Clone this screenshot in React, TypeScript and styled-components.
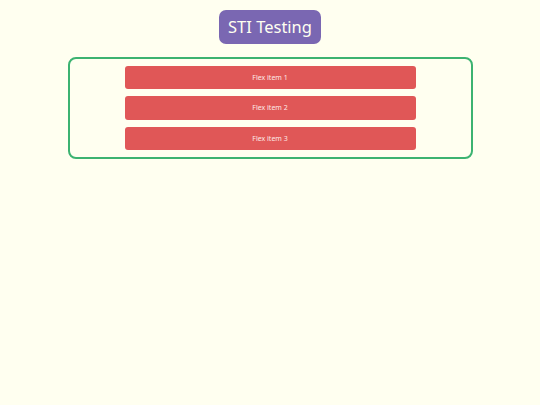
import React from "react";
import styled, { createGlobalStyle } from "styled-components";

const GlobalStyle = createGlobalStyle`
  html, body {
    margin: 0;
    padding: 0;
    background: #fffff0;
    font-family: "Noto Sans", "Open Sans", sans-serif;
  }
`;

const Page = styled.div`
  display: flex;
  flex-direction: column;
  align-items: center;
  padding-top: 10px;
  gap: 13px;
`;

const Title = styled.h1`
  margin: 0;
  padding: 5px 9px;
  background: #7a67b2;
  color: #fffff0;
  font-size: 16.5px;
  font-weight: 400;
  line-height: 24px;
  border-radius: 7px;
`;

const FlexBox = styled.div`
  box-sizing: border-box;
  width: 75%;
  display: flex;
  flex-direction: column;
  align-items: center;
  gap: 7px;
  padding: 7px 0;
  border: 2px solid #3cb371;
  border-radius: 8px;
`;

const FlexItem = styled.div`
  width: 291px;
  height: 23.3px;
  display: flex;
  align-items: center;
  justify-content: center;
  background: #e05757;
  color: #fde9e6;
  font-size: 7px;
  border-radius: 3px;
`;

export default function App() {
  const items = ["Flex item 1", "Flex item 2", "Flex item 3"];
  return (
    <>
      <GlobalStyle />
      <Page>
        <Title>STI Testing</Title>
        <FlexBox>
          {items.map((label) => (
            <FlexItem key={label}>{label}</FlexItem>
          ))}
        </FlexBox>
      </Page>
    </>
  );
}
